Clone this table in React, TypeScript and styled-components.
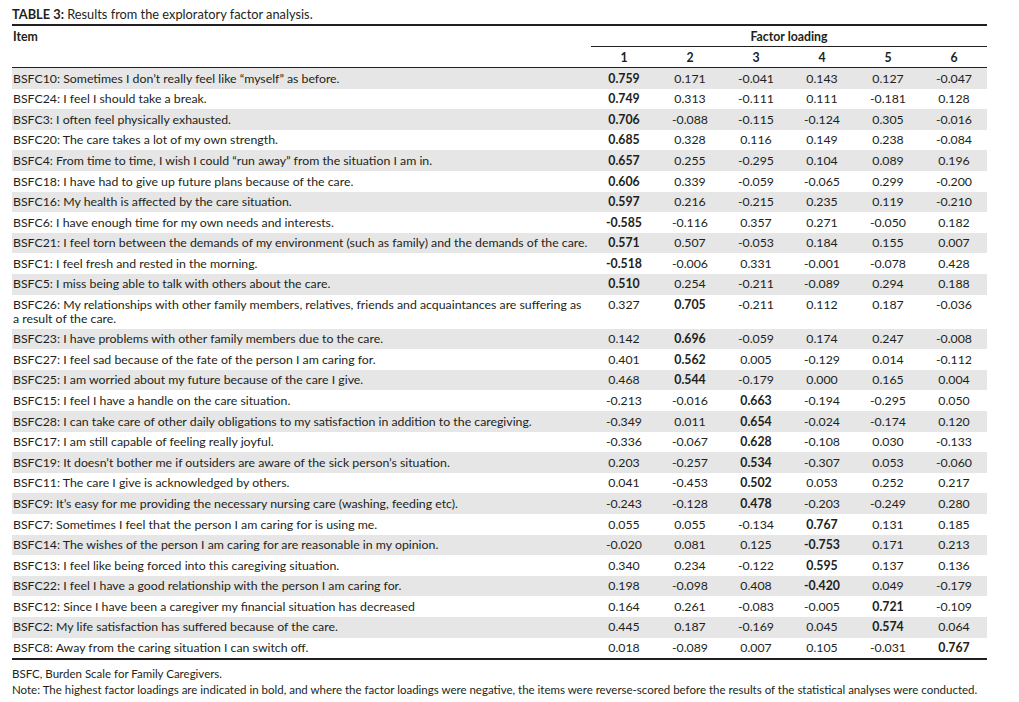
import styled, { createGlobalStyle } from 'styled-components';

type Row = { item: string; values: string[]; bold: number };

const rows: Row[] = [
  { item: 'BSFC10: Sometimes I don’t really feel like “myself” as before.', values: ['0.759', '0.171', '-0.041', '0.143', '0.127', '-0.047'], bold: 0 },
  { item: 'BSFC24: I feel I should take a break.', values: ['0.749', '0.313', '-0.111', '0.111', '-0.181', '0.128'], bold: 0 },
  { item: 'BSFC3: I often feel physically exhausted.', values: ['0.706', '-0.088', '-0.115', '-0.124', '0.305', '-0.016'], bold: 0 },
  { item: 'BSFC20: The care takes a lot of my own strength.', values: ['0.685', '0.328', '0.116', '0.149', '0.238', '-0.084'], bold: 0 },
  { item: 'BSFC4: From time to time, I wish I could “run away” from the situation I am in.', values: ['0.657', '0.255', '-0.295', '0.104', '0.089', '0.196'], bold: 0 },
  { item: 'BSFC18: I have had to give up future plans because of the care.', values: ['0.606', '0.339', '-0.059', '-0.065', '0.299', '-0.200'], bold: 0 },
  { item: 'BSFC16: My health is affected by the care situation.', values: ['0.597', '0.216', '-0.215', '0.235', '0.119', '-0.210'], bold: 0 },
  { item: 'BSFC6: I have enough time for my own needs and interests.', values: ['-0.585', '-0.116', '0.357', '0.271', '-0.050', '0.182'], bold: 0 },
  { item: 'BSFC21: I feel torn between the demands of my environment (such as family) and the demands of the care.', values: ['0.571', '0.507', '-0.053', '0.184', '0.155', '0.007'], bold: 0 },
  { item: 'BSFC1: I feel fresh and rested in the morning.', values: ['-0.518', '-0.006', '0.331', '-0.001', '-0.078', '0.428'], bold: 0 },
  { item: 'BSFC5: I miss being able to talk with others about the care.', values: ['0.510', '0.254', '-0.211', '-0.089', '0.294', '0.188'], bold: 0 },
  { item: 'BSFC26: My relationships with other family members, relatives, friends and acquaintances are suffering as a result of the care.', values: ['0.327', '0.705', '-0.211', '0.112', '0.187', '-0.036'], bold: 1 },
  { item: 'BSFC23: I have problems with other family members due to the care.', values: ['0.142', '0.696', '-0.059', '0.174', '0.247', '-0.008'], bold: 1 },
  { item: 'BSFC27: I feel sad because of the fate of the person I am caring for.', values: ['0.401', '0.562', '0.005', '-0.129', '0.014', '-0.112'], bold: 1 },
  { item: 'BSFC25: I am worried about my future because of the care I give.', values: ['0.468', '0.544', '-0.179', '0.000', '0.165', '0.004'], bold: 1 },
  { item: 'BSFC15: I feel I have a handle on the care situation.', values: ['-0.213', '-0.016', '0.663', '-0.194', '-0.295', '0.050'], bold: 2 },
  { item: 'BSFC28: I can take care of other daily obligations to my satisfaction in addition to the caregiving.', values: ['-0.349', '0.011', '0.654', '-0.024', '-0.174', '0.120'], bold: 2 },
  { item: 'BSFC17: I am still capable of feeling really joyful.', values: ['-0.336', '-0.067', '0.628', '-0.108', '0.030', '-0.133'], bold: 2 },
  { item: 'BSFC19: It doesn’t bother me if outsiders are aware of the sick person’s situation.', values: ['0.203', '-0.257', '0.534', '-0.307', '0.053', '-0.060'], bold: 2 },
  { item: 'BSFC11: The care I give is acknowledged by others.', values: ['0.041', '-0.453', '0.502', '0.053', '0.252', '0.217'], bold: 2 },
  { item: 'BSFC9: It’s easy for me providing the necessary nursing care (washing, feeding etc).', values: ['-0.243', '-0.128', '0.478', '-0.203', '-0.249', '0.280'], bold: 2 },
  { item: 'BSFC7: Sometimes I feel that the person I am caring for is using me.', values: ['0.055', '0.055', '-0.134', '0.767', '0.131', '0.185'], bold: 3 },
  { item: 'BSFC14: The wishes of the person I am caring for are reasonable in my opinion.', values: ['-0.020', '0.081', '0.125', '-0.753', '0.171', '0.213'], bold: 3 },
  { item: 'BSFC13: I feel like being forced into this caregiving situation.', values: ['0.340', '0.234', '-0.122', '0.595', '0.137', '0.136'], bold: 3 },
  { item: 'BSFC22: I feel I have a good relationship with the person I am caring for.', values: ['0.198', '-0.098', '0.408', '-0.420', '0.049', '-0.179'], bold: 3 },
  { item: 'BSFC12: Since I have been a caregiver my financial situation has decreased', values: ['0.164', '0.261', '-0.083', '-0.005', '0.721', '-0.109'], bold: 4 },
  { item: 'BSFC2: My life satisfaction has suffered because of the care.', values: ['0.445', '0.187', '-0.169', '0.045', '0.574', '0.064'], bold: 4 },
  { item: 'BSFC8: Away from the caring situation I can switch off.', values: ['0.018', '-0.089', '0.007', '0.105', '-0.031', '0.767'], bold: 5 },
];

const GlobalStyle = createGlobalStyle`
  body {
    margin: 0;
    background: #fff;
    font-family: Lato, "Open Sans", sans-serif;
    color: #231f20;
  }
`;

const Page = styled.div`
  width: 975px;
  padding: 6px 0 0 12px;
`;

const Caption = styled.div`
  font-size: 12.8px;
  line-height: 17px;
  padding-bottom: 1px;
  border-bottom: 2px solid #231f20;
  b {
    font-weight: 700;
  }
`;

const Table = styled.table`
  width: 100%;
  border-collapse: collapse;
  font-size: 12.3px;
  border-bottom: 2px solid #231f20;
`;

const HeadCell = styled.th<{ $rule?: boolean }>`
  font-weight: 700;
  text-align: center;
  padding: 1px 0 0;
  height: 19px;
  line-height: 14px;
  border-bottom: ${(p) => (p.$rule ? '1px solid #231f20' : 'none')};
`;

const ItemHead = styled.th`
  font-weight: 700;
  text-align: left;
  vertical-align: top;
  padding: 3px 0 0 1px;
`;

const BodyRow = styled.tr<{ $shaded: boolean }>`
  background: ${(p) => (p.$shaded ? '#e6e6e6' : '#fff')};
`;

const ItemCell = styled.td`
  padding: 3.55px 2px 3.55px 1px;
  line-height: 13.5px;
  vertical-align: top;
`;

const ValueCell = styled.td<{ $bold: boolean }>`
  text-align: center;
  padding: 3.55px 0;
  line-height: 13.5px;
  vertical-align: top;
  width: 66px;
  font-weight: ${(p) => (p.$bold ? 700 : 400)};
`;

const Notes = styled.div`
  font-size: 11.5px;
  line-height: 16px;
  padding-top: 6px;
`;

export default function App() {
  return (
    <Page>
      <GlobalStyle />
      <Caption>
        <b>TABLE 3:</b> Results from the exploratory factor analysis.
      </Caption>
      <Table>
        <thead>
          <tr>
            <ItemHead>Item</ItemHead>
            <HeadCell colSpan={6} $rule>
              Factor loading
            </HeadCell>
          </tr>
          <tr>
            <HeadCell $rule />
            {[1, 2, 3, 4, 5, 6].map((n) => (
              <HeadCell key={n} $rule>
                {n}
              </HeadCell>
            ))}
          </tr>
        </thead>
        <tbody>
          {rows.map((r, i) => (
            <BodyRow key={r.item} $shaded={i % 2 === 0}>
              <ItemCell>{r.item}</ItemCell>
              {r.values.map((v, j) => (
                <ValueCell key={j} $bold={j === r.bold}>
                  {v}
                </ValueCell>
              ))}
            </BodyRow>
          ))}
        </tbody>
      </Table>
      <Notes>
        <div>BSFC, Burden Scale for Family Caregivers.</div>
        <div>
          Note: The highest factor loadings are indicated in bold, and where the factor loadings were negative, the
          items were reverse-scored before the results of the statistical analyses were conducted.
        </div>
      </Notes>
    </Page>
  );
}
